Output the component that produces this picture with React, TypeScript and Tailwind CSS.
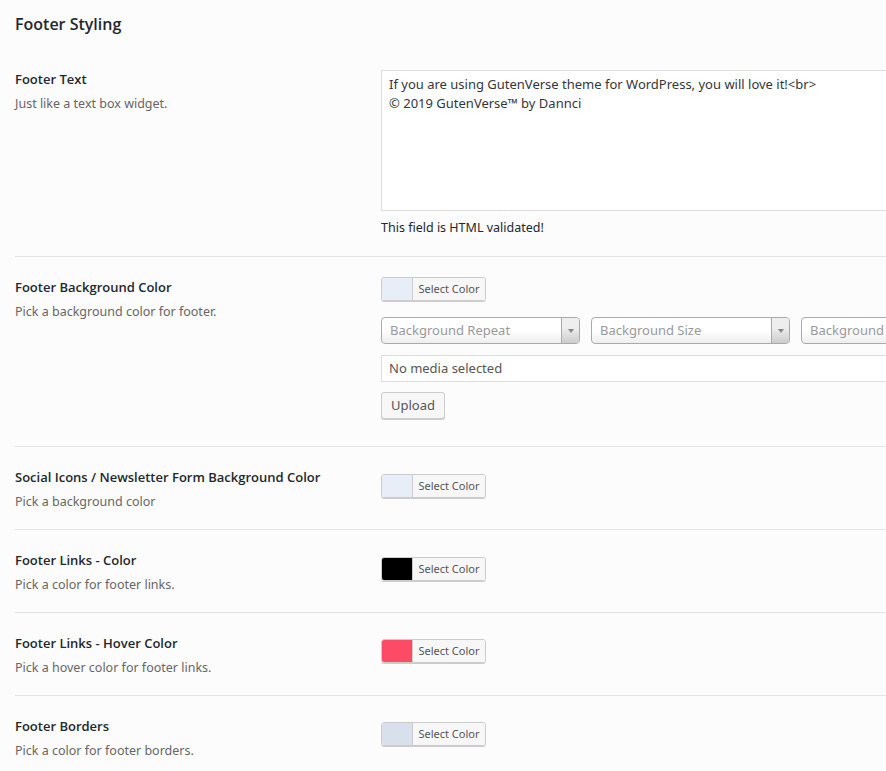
import React from "react";

const font = { fontFamily: '"Noto Sans", "Open Sans", sans-serif' };
const heading = { fontFamily: '"Open Sans", "Noto Sans", sans-serif' };

function ColorButton({ color }: { color: string }) {
  return (
    <button
      type="button"
      className="flex h-6 w-[105px] overflow-hidden rounded-[3px] border border-[#ccc] shadow-[0_1px_0_#ccc]"
    >
      <span className="h-full w-[30px]" style={{ backgroundColor: color }} />
      <span className="flex h-full flex-1 items-center justify-center border-l border-[#ccc] bg-[#f7f7f7] text-[11px] text-[#555]">
        Select Color
      </span>
    </button>
  );
}

function FakeSelect({ label, width }: { label: string; width: string }) {
  return (
    <div
      className={`flex h-[27px] shrink-0 overflow-hidden rounded-[4px] border border-[#aaa] bg-[linear-gradient(to_top,#eee_0%,#fff_50%)] ${width}`}
    >
      <span className="flex flex-1 items-center overflow-hidden whitespace-nowrap pl-[8px] text-[13px] text-[#999]">
        {label}
      </span>
      <span className="flex w-[18px] items-center justify-center border-l border-[#aaa] bg-[linear-gradient(to_top,#ccc_0%,#eee_60%)]">
        <svg width="6" height="4" viewBox="0 0 6 4">
          <path d="M0 0h6L3 4z" fill="#888" />
        </svg>
      </span>
    </div>
  );
}

function Row({
  title,
  desc,
  children,
  last,
}: {
  title: string;
  desc: string;
  children: React.ReactNode;
  last?: boolean;
}) {
  return (
    <div className={`flex pt-5 ${last ? "" : "border-b border-[#e5e5e5]"}`}>
      <div className="w-[366px] shrink-0 pb-[17px]">
        <h3 className="text-[13px] font-semibold leading-5 text-[#23282d]" style={heading}>
          {title}
        </h3>
        <p className="mt-[5px] text-[12.5px] leading-5 text-[#666]">{desc}</p>
      </div>
      <div className="min-w-0 flex-1">{children}</div>
    </div>
  );
}

export default function App() {
  return (
    <div className="min-h-[771px] overflow-hidden bg-[#fcfcfc] pl-[15px]" style={font}>
      <h2 className="pt-3 text-[16px] font-semibold leading-6 text-[#23282d]" style={heading}>
        Footer Styling
      </h2>

      <div className="mt-[13px]">
        <Row title="Footer Text" desc="Just like a text box widget.">
          <div className="mt-px h-[141px] w-[520px] border border-[#ddd] bg-white px-[7px] py-[4px] text-[13px] leading-[19px] text-[#32373c]">
            If you are using GutenVerse theme for WordPress, you will love it!&lt;br&gt;
            <br />© 2019 GutenVerse™ by Dannci
          </div>
          <p className="mt-[7px] pb-[18px] text-[12.5px] leading-5 text-[#23282d]">This field is HTML validated!</p>
        </Row>

        <Row title="Footer Background Color" desc="Pick a background color for footer.">
          <div className="pb-[27px]">
            <ColorButton color="#e8eef8" />
            <div className="mt-4 flex gap-[11px] overflow-hidden">
              <FakeSelect label="Background Repeat" width="w-[199px]" />
              <FakeSelect label="Background Size" width="w-[199px]" />
              <FakeSelect label="Background Position" width="w-[199px]" />
            </div>
            <div className="mt-[11px] flex h-[27px] w-[520px] items-center border border-[#ddd] bg-white pl-[7px] text-[13px] text-[#555]">
              No media selected
            </div>
            <button
              type="button"
              className="mt-[10px] flex h-[27px] w-[64px] items-center justify-center rounded-[3px] border border-[#ccc] bg-[#f7f7f7] text-[13px] text-[#555] shadow-[0_1px_0_#ccc]"
            >
              Upload
            </button>
          </div>
        </Row>

        <Row title="Social Icons / Newsletter Form Background Color" desc="Pick a background color">
          <div className="mt-[7px]">
            <ColorButton color="#e8eef8" />
          </div>
        </Row>

        <Row title="Footer Links - Color" desc="Pick a color for footer links.">
          <div className="mt-[7px]">
            <ColorButton color="#000000" />
          </div>
        </Row>

        <Row title="Footer Links - Hover Color" desc="Pick a hover color for footer links.">
          <div className="mt-[6px]">
            <ColorButton color="#fd4a66" />
          </div>
        </Row>

        <Row title="Footer Borders" desc="Pick a color for footer borders." last>
          <div className="mt-[6px]">
            <ColorButton color="#d8e0ec" />
          </div>
        </Row>
      </div>
    </div>
  );
}
